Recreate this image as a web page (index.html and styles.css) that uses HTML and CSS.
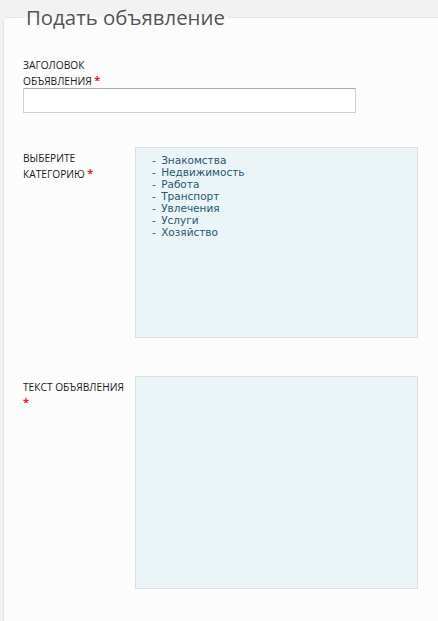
FILE: index.html
```html
<!DOCTYPE html>
<html lang="ru">
<head>
    <meta charset="UTF-8">
    <meta name="viewport" content="width=device-width, initial-scale=1.0">
    <title>Подать объявление</title>
    <link rel="stylesheet" href="styles.css">
</head>
<body>
    <form class="ad-form">
        <fieldset>
            <legend>Подать объявление</legend>

            <div class="field field-stacked">
                <label for="ad-title">Заголовок объявления <span class="req">*</span></label>
                <input type="text" id="ad-title" class="text-input">
            </div>

            <div class="field">
                <label>Выберите категорию <span class="req">*</span></label>
                <div class="cat-box">
                    <ul class="cat-list">
                        <li>- Знакомства</li>
                        <li>- Недвижимость</li>
                        <li>- Работа</li>
                        <li>- Транспорт</li>
                        <li>- Увлечения</li>
                        <li>- Услуги</li>
                        <li>- Хозяйство</li>
                    </ul>
                </div>
            </div>

            <div class="field">
                <label for="ad-text">Текст объявления <span class="req">*</span></label>
                <textarea id="ad-text" class="text-area"></textarea>
            </div>
        </fieldset>
    </form>
</body>
</html>
```

FILE: styles.css
```css
body {
    margin: 0;
    padding: 3px 0 0 3px;
    background-color: #f2f2f2;
    font-family: "Open Sans", Arial, sans-serif;
    overflow: hidden;
}

.ad-form fieldset {
    width: 480px;
    margin: 0;
    padding: 26px 0 40px 19px;
    border: 1px solid #e4e4e4;
    border-radius: 3px;
    background-color: #fcfcfc;
}

.ad-form legend {
    padding: 0 3px;
    margin-left: 0;
    font-size: 20.4px;
    color: #555;
}

.field {
    display: grid;
    grid-template-columns: 112px 283px;
    margin-bottom: 38px;
}

.field-stacked {
    display: block;
    margin-bottom: 34px;
}

.field label {
    display: block;
    padding: 3px 8px 0 0;
    font-size: 10.2px;
    line-height: 16px;
    text-transform: uppercase;
    color: #1a1a1a;
}

.field-stacked label {
    width: 100px;
    padding: 0;
}

/* звёздочка обязательного поля */
.req {
    color: #e0202a;
    font-size: 11px;
    font-weight: bold;
    line-height: 10px;
    vertical-align: 1px;
}

.text-input {
    display: block;
    width: 333px;
    height: 25px;
    margin: -1px 0 0;
    box-sizing: border-box;
    border: 1px solid #d0d0d0;
    border-top-color: #a9a9a9;
    background: #fff;
}

.cat-box,
.text-area {
    box-sizing: border-box;
    width: 283px;
    border: 1px solid #d5e1e5;
    background-color: #ebf4f6;
}

.cat-box {
    height: 191px;
    padding: 6px 0 0 16px;
}

.text-area {
    display: block;
    height: 213px;
    margin: 0;
    resize: none;
}

.cat-list {
    list-style: none;
    margin: 0;
    padding: 0;
    font-family: "DejaVu Sans", Verdana, sans-serif;
    font-size: 10.5px;
    line-height: 12px;
    word-spacing: 2px;
    color: #255a6e;
}
```
